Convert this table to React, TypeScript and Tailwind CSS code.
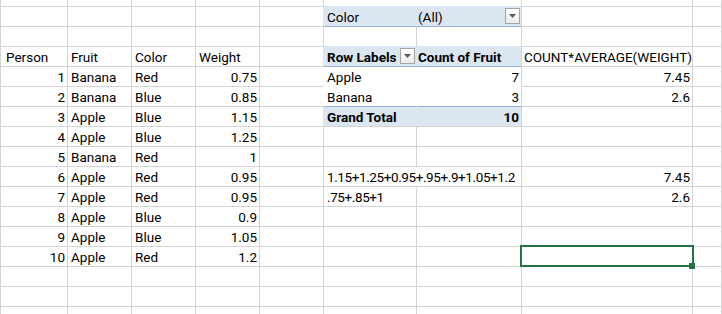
import type { ReactNode } from "react"

// column widths include the 1px right gridline
const cols = "grid grid-cols-[67px_64px_64px_64px_64px_93px_105px_171px_1fr]"

const people: [number, string, string, string][] = [
  [1, "Banana", "Red", "0.75"],
  [2, "Banana", "Blue", "0.85"],
  [3, "Apple", "Blue", "1.15"],
  [4, "Apple", "Blue", "1.25"],
  [5, "Banana", "Red", "1"],
  [6, "Apple", "Red", "0.95"],
  [7, "Apple", "Red", "0.95"],
  [8, "Apple", "Blue", "0.9"],
  [9, "Apple", "Blue", "1.05"],
  [10, "Apple", "Red", "1.2"],
]

type CellProps = {
  t?: string
  right?: boolean
  bold?: boolean
  bg?: string
  rc?: string
  bc?: string
  pl?: string
  extra?: string
  drop?: boolean
  over?: boolean
  children?: ReactNode
}

function DropButton() {
  return (
    <div className="mt-px mr-px flex h-4 w-[15px] shrink-0 items-center justify-center border border-[#a5a5a5] bg-gradient-to-b from-white to-[#ececec]">
      <svg width="7" height="4" viewBox="0 0 7 4">
        <path d="M0 0h7L3.5 4z" fill="#5b5b5b" />
      </svg>
    </div>
  )
}

function Cell({
  t,
  right,
  bold,
  bg = "",
  rc = "border-r-[#d4d4d4]",
  bc = "border-b-[#d4d4d4]",
  pl = "pl-[3px]",
  extra = "",
  drop,
  over,
  children,
}: CellProps) {
  return (
    <div
      className={`relative flex min-w-0 border-r border-b ${rc} ${bc} ${bg} ${
        over ? "z-10 overflow-visible" : "overflow-hidden"
      }`}
    >
      {t !== undefined && (
        <span
          className={`flex-1 whitespace-nowrap pt-[2px] leading-[16px] ${
            right ? "pr-[2px] text-right" : pl
          } ${bold ? "font-bold" : ""} ${extra}`}
        >
          {t}
        </span>
      )}
      {drop && <DropButton />}
      {children}
    </div>
  )
}

function Blank({ n }: { n: number }) {
  return (
    <>
      {Array.from({ length: n }, (_, i) => (
        <Cell key={i} />
      ))}
    </>
  )
}

function PersonCells({ p }: { p: [number, string, string, string] }) {
  return (
    <>
      <Cell t={String(p[0])} right />
      <Cell t={p[1]} />
      <Cell t={p[2]} />
      <Cell t={p[3]} right />
    </>
  )
}

const pivotBg = "bg-[#dce6f1]"

export default function App() {
  return (
    <div className="h-[314px] w-[722px] overflow-hidden bg-white font-['Roboto','Liberation_Sans',sans-serif] text-[13.5px] text-black">
      <div className="border-l border-[#d4d4d4]">
        {/* top sliver of the row above */}
        <div className={`${cols} h-[7px]`}>
          <Blank n={5} />
          <Cell bc="border-b-[#dce6f1]" rc="border-r-transparent" />
          <Cell bc="border-b-[#dce6f1]" />
          <Blank n={2} />
        </div>

        {/* report filter */}
        <div className={`${cols} h-5`}>
          <Blank n={4} />
          <Cell rc="border-r-[#dce6f1]" />
          <Cell t="Color" bg={pivotBg} rc="border-r-[#dce6f1]" bc="border-b-[#95b3d7]" />
          <Cell t="(All)" pl="pl-px" bg={pivotBg} bc="border-b-[#95b3d7]" drop />
          <Blank n={2} />
        </div>

        <div className={`${cols} h-5`}>
          <Blank n={5} />
          <Cell bc="border-b-[#dce6f1]" />
          <Cell bc="border-b-[#dce6f1]" />
          <Blank n={2} />
        </div>

        {/* headers */}
        <div className={`${cols} h-5`}>
          <Cell t="Person" pl="pl-[5px]" />
          <Cell t="Fruit" />
          <Cell t="Color" />
          <Cell t="Weight" />
          <Cell rc="border-r-[#dce6f1]" />
          <Cell t="Row Labels" bold bg={pivotBg} rc="border-r-[#dce6f1]" bc="border-b-[#95b3d7]" drop />
          <Cell t="Count of Fruit" bold pl="pl-px" bg={pivotBg} bc="border-b-[#95b3d7]" />
          <Cell t="COUNT*AVERAGE(WEIGHT)" pl="pl-[2px]" />
          <Cell />
        </div>

        <div className={`${cols} h-5`}>
          <PersonCells p={people[0]} />
          <Cell rc="border-r-transparent" />
          <Cell t="Apple" rc="border-r-transparent" bc="border-b-transparent" />
          <Cell t="7" right bc="border-b-transparent" />
          <Cell t="7.45" right />
          <Cell />
        </div>

        <div className={`${cols} h-5`}>
          <PersonCells p={people[1]} />
          <Cell rc="border-r-transparent" />
          <Cell t="Banana" rc="border-r-transparent" bc="border-b-[#95b3d7]" />
          <Cell t="3" right bc="border-b-[#95b3d7]" />
          <Cell t="2.6" right />
          <Cell />
        </div>

        <div className={`${cols} h-5`}>
          <PersonCells p={people[2]} />
          <Cell rc="border-r-[#dce6f1]" />
          <Cell t="Grand Total" bold bg={pivotBg} rc="border-r-[#dce6f1]" />
          <Cell t="10" bold right bg={pivotBg} />
          <Blank n={2} />
        </div>

        <div className={`${cols} h-5`}>
          <PersonCells p={people[3]} />
          <Blank n={5} />
        </div>

        <div className={`${cols} h-5`}>
          <PersonCells p={people[4]} />
          <Blank n={5} />
        </div>

        {/* hand-worked sums per fruit */}
        <div className={`${cols} h-5`}>
          <PersonCells p={people[5]} />
          <Cell />
          <Cell
            t="1.15+1.25+0.95+.95+.9+1.05+1.2"
            rc="border-r-transparent"
            extra="tracking-[-0.4px]"
            over
          />
          <Cell />
          <Cell t="7.45" right />
          <Cell />
        </div>

        <div className={`${cols} h-5`}>
          <PersonCells p={people[6]} />
          <Cell />
          <Cell t=".75+.85+1" extra="tracking-[-0.4px]" />
          <Cell />
          <Cell t="2.6" right />
          <Cell />
        </div>

        {people.slice(7, 9).map((p) => (
          <div key={p[0]} className={`${cols} h-5`}>
            <PersonCells p={p} />
            <Blank n={5} />
          </div>
        ))}

        <div className={`${cols} h-5`}>
          <PersonCells p={people[9]} />
          <Blank n={3} />
          <Cell over>
            {/* active cell outline + fill handle */}
            <div className="pointer-events-none absolute -top-[2px] -left-[2px] h-[22px] w-[174px] border-2 border-[#217346]">
              <div className="absolute top-[16px] left-[167px] h-[6px] w-[6px] bg-[#217346]" />
            </div>
          </Cell>
          <Cell />
        </div>

        {[0, 1, 2].map((i) => (
          <div key={i} className={`${cols} h-5`}>
            <Blank n={9} />
          </div>
        ))}
      </div>
    </div>
  )
}
